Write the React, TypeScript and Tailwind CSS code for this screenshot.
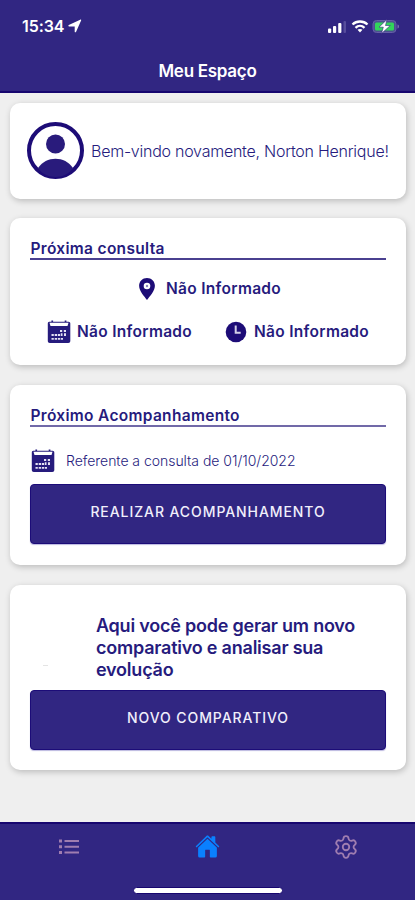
import type { ReactNode } from "react";
import { IoHome } from "react-icons/io5";
import { Settings } from "lucide-react";

function CalendarIcon() {
  return (
    <svg width="24" height="24" viewBox="0 0 24 24" fill="#261b7d">
      <path d="M2.200 1.700h2.200V.6h1.700v1.100h11.600V.6h1.700v1.100h2.100c1.100 0 1.800.8 1.800 1.800V21c0 1.200-.8 2-2 2H2.800c-1.200 0-2-.8-2-2V3.500c0-1 .6-1.800 1.400-1.800z" />
      <path d="M2.500 2.800h19L20.500 6H3.500z" fill="#fff" />
      <path d="M13 10h2.200v2H13zM16.800 10H19v2h-2.200zM4.500 14h2.300v2H4.500zM7.700 14H10v2H7.700zM10.800 14h2.300v2h-2.300zM13.800 13.300h1.700V16h-1.700zM17 13.300h2V16h-2zM4.500 18h2.300v1.800H4.500zM7.700 18H10v1.800H7.700zM10.800 18h2.300v1.800h-2.300zM13.800 18H16v1.800h-2.200z" fill="#e5e2f4" />
    </svg>
  );
}

function Card({ className, children }: { className: string; children: ReactNode }) {
  return (
    <section className={`mx-2.5 w-[396px] shrink-0 rounded-[10px] bg-white px-5 shadow-[1px_2px_6px_rgba(0,0,0,0.22)] ${className}`}>
      {children}
    </section>
  );
}

function ActionButton({ children }: { children: ReactNode }) {
  return (
    <button className="flex h-[60px] w-full items-center justify-center rounded-[4px] border border-[#1c0c78] bg-[#312682] pb-1.5 text-[14px] font-medium tracking-[0.920px] text-[#f0effb] shadow-[0_1px_1px_#bbb7df]">
      {children}
    </button>
  );
}

export default function App() {
  return (
    <div className="flex h-[900px] w-[415px] flex-col overflow-hidden bg-[#efefef] font-[Inter,'Liberation_Sans',sans-serif] text-[#261b7d]">
      <header className="h-[93px] shrink-0 border-b-2 border-[#17066f] bg-[#312682] text-white">
        <div className="flex h-[52px] items-center pl-[22px] pr-[15px]">
          <span className="text-[16px] leading-5 font-semibold tracking-[-0.1px]">15:34</span>
          <svg className="ml-1" width="14" height="14" viewBox="0 0 14 14" fill="white">
            <path d="M.8 6 12.200.7c.7-.3 1.200.2.9.9L8 12.900c-.3.700-1.300.6-1.300-.2V7.500H1.200C.3 7.500 0 6.400.8 6z" />
          </svg>
          <svg className="ml-auto" width="73" height="16" viewBox="0 0 73 16">
            <g fill="white">
              <rect x="1" y="10.500" width="3.200" height="4.500" rx="1" />
              <rect x="6" y="8" width="3.200" height="7" rx="1" />
              <rect x="11.200" y="5" width="3.200" height="10" rx="1" />
            </g>
            <rect x="16.500" y="3" width="2.500" height="12" rx="1" fill="#574d9c" />
            <g fill="none" stroke="white" strokeWidth="2.300">
              <path d="M25.500 6.500c4.200-4 10.800-4 15 0" />
              <path d="M28.500 9.800c2.600-2.500 6.400-2.500 9 0" />
            </g>
            <path d="m33 14.500-2.500-2.700c1.400-1.200 3.600-1.200 5 0z" fill="white" />
            <rect x="46" y="2.500" width="23" height="12" rx="3.500" fill="#4c5190" stroke="#665da8" />
            <rect x="48" y="4.500" width="19" height="8" rx="1.500" fill="#32d45b" />
            <path d="M70.500 6.500c2 .5 2 3.500 0 4z" fill="#7970b2" />
            <path d="M60 1.500 52 9.200h4.300L54.500 15.500l8.800-8H58.500z" fill="white" stroke="#312682" strokeWidth=".6" />
          </svg>
        </div>
        <h1 className="pt-2 text-center text-[17px] leading-[23px] font-semibold tracking-[-0.280px]">Meu Espaço</h1>
      </header>

      <main className="flex flex-1 flex-col pt-[10px]">
        <Card className="flex h-[96px] items-center">
          <svg className="-ml-[4px] shrink-0" width="58" height="58" viewBox="0 0 58 58">
            <circle cx="29.500" cy="28.500" r="26.500" fill="white" stroke="#1d0c77" strokeWidth="4" />
            <circle cx="29.500" cy="22" r="9.500" fill="#291b7c" />
            <path d="M12 46c8-12.500 27-12.500 35 0-8 12-27 12-35 0z" fill="#291b7c" />
          </svg>
          <p className="ml-[7px] text-[16px] leading-5 font-light tracking-[-0.250px] whitespace-nowrap">Bem-vindo novamente, Norton Henrique!</p>
        </Card>

        <Card className="mt-[19px] h-[147px] pt-[21px]">
          <h2 className="h-[21px] border-b-2 border-[#4a4090] pl-[0.5px] text-[15.500px] leading-[19px] font-semibold tracking-[0.310px]">Próxima consulta</h2>
          <div className="mt-[18px] flex h-[22px] items-center pl-[109px] text-[15.500px] font-semibold tracking-[0.300px]">
            <svg width="16" height="22" viewBox="0 0 16 22">
              <path d="M8 0C3.600 0 .1 3.400.1 7.700.1 13.200 5.600 18.500 8 22c2.400-3.500 7.900-8.800 7.900-14.300C15.900 3.400 12.400 0 8 0z" fill="#1d0c77" />
              <circle cx="8" cy="8" r="3.300" fill="#fff" />
              <circle cx="8" cy="8" r="1.200" fill="#8c84bd" />
            </svg>
            <span className="ml-[11px]">Não Informado</span>
          </div>
          <div className="mt-[20px] flex h-6 items-center pl-[17px] text-[15.500px] font-semibold tracking-[0.300px]">
            <CalendarIcon />
            <span className="ml-[6px] w-[115px] whitespace-nowrap">Não Informado</span>
            <svg className="ml-[33px]" width="22" height="22" viewBox="0 0 22 22">
              <circle cx="11" cy="11" r="10.300" fill="#1d0c77" />
              <path d="M10.700 4.500v7.300h5" fill="none" stroke="#d3cfe8" strokeWidth="2" />
            </svg>
            <span className="ml-[7px] whitespace-nowrap">Não Informado</span>
          </div>
        </Card>

        <Card className="mt-5 h-[180px] pt-5">
          <h2 className="h-[22px] border-b-2 border-[#7169a8] pl-[0.5px] text-[15.500px] leading-[21px] font-semibold tracking-[0.310px]">Próximo Acompanhamento</h2>
          <div className="mt-[22px] flex h-6 items-center pl-px">
            <CalendarIcon />
            <span className="ml-[11px] pb-px text-[14px] font-light tracking-[-0.030px]">Referente a consulta de 01/10/2022</span>
          </div>
          <div className="mt-[11px]">
            <ActionButton>REALIZAR ACOMPANHAMENTO</ActionButton>
          </div>
        </Card>

        <Card className="mt-5 h-[185px] pt-[30px]">
          <div className="flex h-[75px]">
            <div className="w-[66px] pt-[50px] pl-[13px]">
              <div className="h-px w-[5px] bg-[#e4e4e4]" />
            </div>
            <p className="text-[18px] leading-[22px] font-semibold tracking-[-0.220px] whitespace-nowrap">
              Aqui você pode gerar um novo<br />comparativo e analisar sua<br />evolução
            </p>
          </div>
          <ActionButton>NOVO COMPARATIVO</ActionButton>
        </Card>
      </main>

      <footer className="flex h-[78px] shrink-0 flex-col border-t-2 border-[#17066f] bg-[#312682]">
        <nav className="grid h-[45px] grid-cols-3 items-center justify-items-center text-[#9f7db0]">
          <svg width="22" height="16" viewBox="0 0 22 16" fill="#9f7db0">
            <path d="M1 .5h3v3H1zM1 6.300h3v3H1zM1 12h3v3H1zM6.500 1h14.500v2H6.500zM6.500 6.700h14.500v2H6.500zM6.500 12.400h14.500v2H6.500z" />
          </svg>
          <IoHome size={25} color="#0a80ff" />
          <Settings size={26} strokeWidth={1.7} />
        </nav>
        <div className="mt-[18px] ml-[133px] h-[7px] w-[150px] rounded-full border border-[#17066f] bg-white" />
      </footer>
    </div>
  );
}
